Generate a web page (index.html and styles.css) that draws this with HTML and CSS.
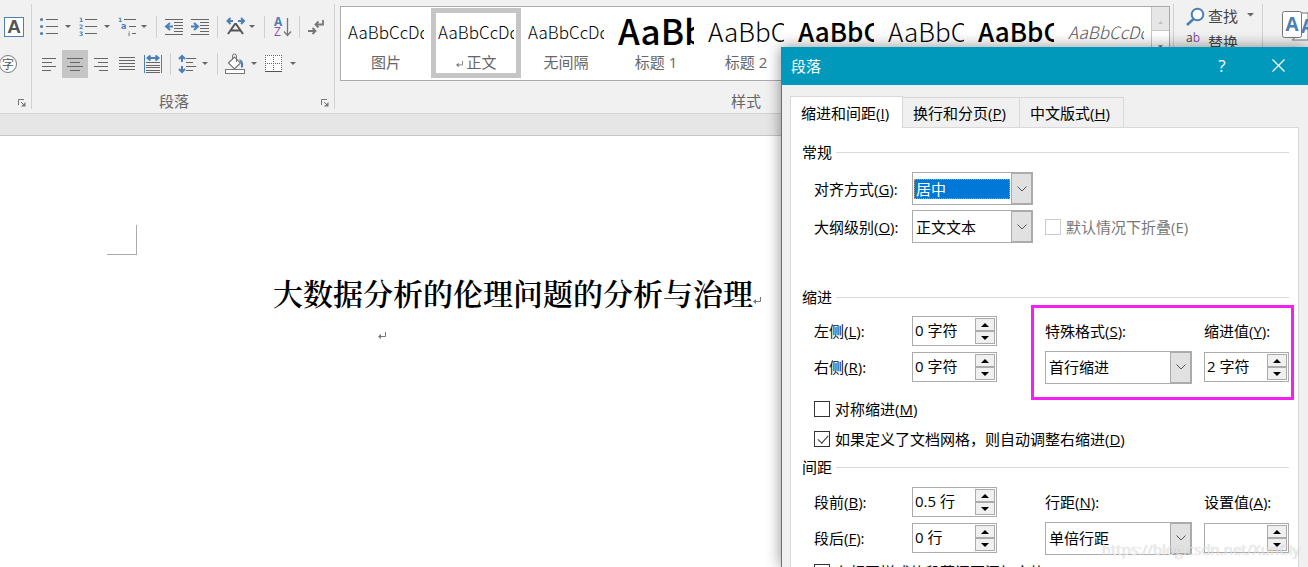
FILE: index.html
```html
<!DOCTYPE html>
<html lang="zh-CN">
<head>
<meta charset="utf-8">
<title>段落</title>
<link rel="stylesheet" href="styles.css">
</head>
<body>
<svg width="0" height="0" class="defs" aria-hidden="true">
  <symbol id="chev" viewBox="0 0 10 6"><path d="M.5.500l4.500 4.500 4.500-4.500" fill="none" stroke="#555"/></symbol>
  <symbol id="up" viewBox="0 0 8 4"><path d="M0 4l4-4 4 4z" fill="#000"/></symbol>
  <symbol id="down" viewBox="0 0 8 4"><path d="M0 0h8l-4 4z" fill="#000"/></symbol>
  <symbol id="ret" viewBox="0 0 8 8"><path d="M7.500 0v4.500H2" fill="none" stroke="#777"/><path d="M0 4.500L3 2v5z" fill="#777"/></symbol>
  <symbol id="launch" viewBox="0 0 8 8"><path d="M.5 6V.5H6M3 3l3 3" fill="none" stroke="#777"/><path d="M7.500 3v4.500H3z" fill="#777"/></symbol>
</svg>
<div class="app">
  <header class="ribbon">
    <section class="group font-group">
      <div class="tools">
        <div class="row"><button class="tool" aria-label="字符边框"><svg width="31" height="28" viewBox="0 13 31 28"><rect x="4.500" y="17.500" width="19" height="19" fill="#fff" stroke="#4a80b5"/><text x="14" y="33" class="ic-a" text-anchor="middle">A</text></svg></button></div>
        <div class="row"><button class="tool" aria-label="带圈字符"><svg width="31" height="28" viewBox="0 50 31 28"><circle cx="8" cy="64" r="8.500" fill="#fff" stroke="#777"/><text x="8" y="69" class="ic-zi" text-anchor="middle">字</text></svg></button></div>
      </div>
      <footer class="caption"><span></span><button class="tool launcher" aria-label="字体设置"><svg width="8" height="8"><use href="#launch"/></svg></button></footer>
    </section>
    <section class="group para-group">
      <div class="tools">
        <div class="row">
          <button class="tool" aria-label="项目符号"><svg width="41" height="28" viewBox="34 13 41 28"><path d="M46 19.500h12M46 26.500h12M46 33.500h12" class="ln"/><g fill="#4a80b5"><circle cx="41.500" cy="19.500" r="1.600"/><circle cx="41.500" cy="26.500" r="1.600"/><circle cx="41.500" cy="33.500" r="1.600"/></g><path d="M65 25h6l-3 3z" class="dn"/></svg></button>
          <button class="tool" aria-label="编号"><svg width="39" height="28" viewBox="75 13 39 28"><path d="M85 19.500h12M85 26.500h12M85 33.500h12" class="ln"/><text x="79" y="22" class="num">1</text><text x="79" y="29" class="num">2</text><text x="79" y="36" class="num">3</text><path d="M104 25h6l-3 3z" class="dn"/></svg></button>
          <button class="tool" aria-label="多级列表"><svg width="39" height="28" viewBox="114 13 39 28"><path d="M124 19.500h12M129 26.500h7M132 33.500h4" class="ln"/><text x="118" y="22" class="num">1</text><text x="121" y="29" class="num big">a</text><text x="128" y="36" class="num">i</text><path d="M141 25h6l-3 3z" class="dn"/></svg></button>
          <i class="bar"></i>
          <button class="tool" aria-label="减少缩进量"><svg width="31" height="28" viewBox="157 13 31 28"><path d="M165 19.500h18M174 22.500h9M174 25.500h9M174 28.500h9M174 31.500h9M165 34.500h18" class="ln"/><path d="M173 26.500h-6M170 23l-4 3.500 4 3.500" class="bl"/></svg></button>
          <button class="tool" aria-label="增加缩进量"><svg width="29" height="28" viewBox="188 13 29 28"><path d="M191 19.500h18M200 22.500h9M200 25.500h9M200 28.500h9M200 31.500h9M191 34.500h18" class="ln"/><path d="M191 26.500h6M194 23l4 3.500-4 3.500" class="bl"/></svg></button>
          <i class="bar"></i>
          <button class="tool" aria-label="中文版式"><svg width="46" height="28" viewBox="218 13 46 28"><path d="M233 21h-5M230.500 18l-3 3 3 3M238 21h5M241 18l3 3-3 3" class="bl"/><path d="M228 34l7-10h1l7 10M231 30.500h9" fill="none" stroke="#555" stroke-width="2"/><path d="M249 25h6l-3 3z" class="dn"/></svg></button>
          <i class="bar"></i>
          <button class="tool" aria-label="排序"><svg width="34" height="28" viewBox="265 13 34 28"><text x="274" y="26" class="az">A</text><text x="274" y="36" class="az z">Z</text><path d="M287.500 18v17M284 31.500l3.500 4 3.500-4" fill="none" stroke="#777" stroke-width="1.300"/></svg></button>
          <i class="bar"></i>
          <button class="tool" aria-label="显示编辑标记"><svg width="30" height="28" viewBox="300 13 30 28"><path d="M323 20v4.500h-7M318.500 21.500l-3 3 3 3M308 31h7M312.500 28l3 3-3 3" fill="none" stroke="#777" stroke-width="1.800"/></svg></button>
        </div>
        <div class="row">
          <button class="tool" aria-label="左对齐"><svg width="28" height="28" viewBox="34 50 28 28"><path d="M42 58.500h14M42 62.500h10M42 66.500h14M42 70.500h9" class="ln"/></svg></button>
          <button class="tool on" aria-label="居中"><svg width="26" height="28" viewBox="62 50 26 28"><path d="M67 58.500h16M70 62.500h10M67 66.500h16M70 70.500h10" class="ln"/></svg></button>
          <button class="tool" aria-label="右对齐"><svg width="26" height="28" viewBox="88 50 26 28"><path d="M94 58.500h14M98 62.500h10M94 66.500h14M99 70.500h9" class="ln"/></svg></button>
          <button class="tool" aria-label="两端对齐"><svg width="26" height="28" viewBox="114 50 26 28"><path d="M119 57.500h16M119 60.500h16M119 63.500h16M119 66.500h16M119 69.500h16" class="ln"/></svg></button>
          <button class="tool" aria-label="分散对齐"><svg width="30" height="28" viewBox="140 50 30 28"><path d="M144.500 55v18M161.500 55v18" stroke="#4a80b5"/><path d="M147 58h12M150.500 55.500l-3 2.500 3 2.500M155.500 55.500l3 2.500-3 2.500" class="bl"/><path d="M146 62.500h14M146 65.500h14M146 67.500h14M146 70.500h14M146 72.500h14" class="ln"/></svg></button>
          <i class="bar"></i>
          <button class="tool" aria-label="行距"><svg width="46" height="28" viewBox="171 50 46 28"><path d="M182 57v5M182 66v5M179 59l3-3 3 3M179 69l3 3 3-3" class="bl"/><path d="M186 58.500h10M186 62.500h7M186 66.500h10M186 70.500h7" class="ln"/><path d="M202 62h6l-3 3z" class="dn"/></svg></button>
          <i class="bar"></i>
          <button class="tool" aria-label="底纹"><svg width="43" height="28" viewBox="218 50 43 28"><path d="M228.500 63l6-6 6 6-6 6z" fill="#fff" stroke="#777" stroke-width="1.200"/><path d="M232.500 59v-3q0-2 2-2t2 2v6" fill="none" stroke="#777"/><path d="M239 59q5 1 4 8l-2 1 0-5z" fill="#4a80b5"/><rect x="225.500" y="69.500" width="19" height="4" fill="#fff" stroke="#777"/><path d="M251 62h6l-3 3z" class="dn"/></svg></button>
          <button class="tool" aria-label="边框"><svg width="40" height="28" viewBox="261 50 40 28"><rect x="265" y="55" width="17" height="16" fill="#fff"/><path d="M265 55.500h17M265 63.500h17M265.500 55v16M273.500 55v16M281.500 55v16" stroke="#666" stroke-dasharray="1 1"/><path d="M265 71.500h17" stroke="#555"/><path d="M290 62h6l-3 3z" class="dn"/></svg></button>
        </div>
      </div>
      <footer class="caption"><span>段落</span><button class="tool launcher" aria-label="段落设置"><svg width="8" height="8"><use href="#launch"/></svg></button></footer>
    </section>
    <section class="group style-group">
      <div class="gallery">
        <button class="style"><span class="sample">AaBbCcDd</span><span class="name">图片</span></button>
        <button class="style chosen"><span class="sample">AaBbCcDd</span><span class="name"><svg width="7" height="7"><use href="#ret"/></svg> 正文</span></button>
        <button class="style"><span class="sample">AaBbCcDd</span><span class="name">无间隔</span></button>
        <button class="style"><span class="sample huge">AaBb</span><span class="name">标题 1</span></button>
        <button class="style"><span class="sample large">AaBbC</span><span class="name">标题 2</span></button>
        <button class="style"><span class="sample large bold">AaBbC</span><span class="name">标题</span></button>
        <button class="style"><span class="sample large">AaBbC</span><span class="name">副标题</span></button>
        <button class="style"><span class="sample large bold">AaBbC</span><span class="name">强调</span></button>
        <button class="style"><span class="sample slant">AaBbCcDd</span><span class="name">不明显强调</span></button>
        <div class="scroller">
          <button class="off" aria-label="上一行"><svg width="5" height="3" viewBox="0 0 8 4"><path d="M0 4l4-4 4 4z" fill="#bbb"/></svg></button>
          <button aria-label="下一行"><svg width="5" height="3" viewBox="0 0 8 4"><path d="M0 0h8l-4 4z" fill="#666"/></svg></button>
          <button aria-label="其他"></button>
        </div>
      </div>
      <footer class="caption"><span>样式</span><span class="launcher"></span></footer>
    </section>
    <section class="group edit-group">
      <button class="tool edit"><svg width="19" height="20" viewBox="0 0 19 20"><circle cx="11.500" cy="7.500" r="5.800" fill="#fff" stroke="#4a80b5" stroke-width="2"/><path d="M7.500 12L1 18" stroke="#4a80b5" stroke-width="2.600"/></svg><span>查找</span><svg width="8" height="4" viewBox="0 0 8 4"><path d="M0 0h7L3.500 3.500z" class="dn"/></svg></button>
      <button class="tool edit"><svg width="19" height="28" viewBox="0 0 19 28"><text x="0" y="13" class="ab">a<tspan fill="#8a4fb5">b</tspan></text><text x="0" y="26" class="ab blue">ac</text></svg><span>替换</span></button>
    </section>
    <section class="group select-group">
      <button class="tool" aria-label="选择"><svg width="45" height="50" viewBox="1263 0 45 50"><path d="M1292 40l4-3v-20l4-4h8v27z" fill="#fff" stroke="#777"/><text x="1301" y="33" class="ic-sel">A</text><rect x="1282.500" y="11.500" width="19" height="26" rx="2" fill="#fff" stroke="#777"/><text x="1292" y="31" class="ic-sel" text-anchor="middle">A</text></svg></button>
    </section>
  </header>
  <div class="strip"></div>
  <main class="page">
    <div class="corner"></div>
    <h1>大数据分析的伦理问题的分析与治理<svg width="8" height="8"><use href="#ret"/></svg></h1>
    <p><svg width="8" height="8"><use href="#ret"/></svg></p>
  </main>

  <div class="dialog" role="dialog" aria-labelledby="dlg-title">
    <header class="titlebar">
      <h2 id="dlg-title">段落</h2>
      <button aria-label="帮助">?</button>
      <button aria-label="关闭"><svg width="13" height="13" viewBox="0 0 13 13"><path d="M.5.5l12 12M12.500.5l-12 12" stroke="#fff" stroke-width="1.200"/></svg></button>
    </header>
    <div class="tabs" role="tablist">
      <button class="tab active" role="tab" aria-selected="true">缩进和间距(<u>I</u>)</button>
      <button class="tab" role="tab">换行和分页(<u>P</u>)</button>
      <button class="tab" role="tab">中文版式(<u>H</u>)</button>
    </div>
    <div class="panel" role="tabpanel">
      <h3>常规</h3>
      <div class="fields general">
        <label for="align">对齐方式(<u>G</u>):</label>
        <div class="combo focus"><select id="align"><option>居中</option></select><span class="drop"><svg width="10" height="6"><use href="#chev"/></svg></span></div>
        <label for="level">大纲级别(<u>O</u>):</label>
        <div class="combo"><select id="level"><option>正文文本</option></select><span class="drop"><svg width="10" height="6"><use href="#chev"/></svg></span></div>
        <label class="check disabled"><input type="checkbox" disabled>默认情况下折叠(E)</label>
      </div>
      <h3>缩进</h3>
      <div class="fields measures">
        <label for="left">左侧(<u>L</u>):</label>
        <div class="spin"><input id="left" type="text" value="0 字符"><button aria-label="增加"><svg width="8" height="4"><use href="#up"/></svg></button><button aria-label="减少"><svg width="8" height="4"><use href="#down"/></svg></button></div>
        <label for="special">特殊格式(<u>S</u>):</label>
        <label for="by">缩进值(<u>Y</u>):</label>
        <label for="right">右侧(<u>R</u>):</label>
        <div class="spin"><input id="right" type="text" value="0 字符"><button aria-label="增加"><svg width="8" height="4"><use href="#up"/></svg></button><button aria-label="减少"><svg width="8" height="4"><use href="#down"/></svg></button></div>
        <div class="combo wide"><select id="special"><option>首行缩进</option></select><span class="drop"><svg width="10" height="6"><use href="#chev"/></svg></span></div>
        <div class="spin"><input id="by" type="text" value="2 字符"><button aria-label="增加"><svg width="8" height="4"><use href="#up"/></svg></button><button aria-label="减少"><svg width="8" height="4"><use href="#down"/></svg></button></div>
        <div class="marker"></div>
      </div>
      <div class="checks">
        <label class="check"><input type="checkbox"><span>对称缩进(<u>M</u>)</span></label>
        <label class="check"><input type="checkbox" checked><span>如果定义了文档网格，则自动调整右缩进(<u>D</u>)</span></label>
      </div>
      <h3>间距</h3>
      <div class="fields measures distance">
        <label for="before">段前(<u>B</u>):</label>
        <div class="spin"><input id="before" type="text" value="0.5 行"><button aria-label="增加"><svg width="8" height="4"><use href="#up"/></svg></button><button aria-label="减少"><svg width="8" height="4"><use href="#down"/></svg></button></div>
        <label for="spacing">行距(<u>N</u>):</label>
        <label for="at">设置值(<u>A</u>):</label>
        <label for="after">段后(<u>F</u>):</label>
        <div class="spin"><input id="after" type="text" value="0 行"><button aria-label="增加"><svg width="8" height="4"><use href="#up"/></svg></button><button aria-label="减少"><svg width="8" height="4"><use href="#down"/></svg></button></div>
        <div class="combo wide"><select id="spacing"><option>单倍行距</option></select><span class="drop"><svg width="10" height="6"><use href="#chev"/></svg></span></div>
        <div class="spin"><input id="at" type="text" value=""><button aria-label="增加"><svg width="8" height="4"><use href="#up"/></svg></button><button aria-label="减少"><svg width="8" height="4"><use href="#down"/></svg></button></div>
      </div>
      <div class="checks last">
        <label class="check"><input type="checkbox"><span>在相同样式的段落间不添加空格(<u>C</u>)</span></label>
      </div>
    </div>
  </div>
  <div class="watermark">https://blog.csdn.net/XunCiy</div>
</div>
</body>
</html>
```
FILE: styles.css
```css
* { box-sizing: border-box; }
body { margin: 0; font: 15px/20px "Open Sans", "Noto Sans CJK SC", sans-serif; color: #000; }
button, input, select { font: inherit; color: inherit; margin: 0; padding: 0; border: 0; background: none; border-radius: 0; }
.defs { position: absolute; }
.app { position: relative; height: 100vh; overflow: hidden; background: #fff; display: flex; flex-direction: column; }

/* Ribbon */
.ribbon { display: flex; flex: none; height: 114px; padding-top: 4px; background: #f1f1f1; border-bottom: 1px solid #d2d2d2; color: #444; }
.group { display: flex; flex-direction: column; height: 105px; border-right: 1px solid #d2d2d2; }
.font-group { width: 32px; }
.para-group { width: 303px; }
.para-group .row { padding-left: 2px; }
.tools { display: flex; flex-direction: column; gap: 9px; padding-top: 9px; }
.row { display: flex; align-items: center; }
.tool { display: block; flex: none; }
.tool svg { display: block; }
.tool.on { background: #c5c5c5; }
.bar { width: 1px; height: 22px; background: #d0d0d0; }
.row .bar:first-of-type { margin-left: 3px; }
.row:nth-child(2) .bar:first-of-type { margin-left: 0; }
.ln { stroke: #666; stroke-width: 1; fill: none; }
.bl { stroke: #4a80b5; stroke-width: 2; fill: none; }
.dn { fill: #666; }
.ic-a { font: bold 19px "Liberation Sans", sans-serif; fill: #555; }
.ic-zi { font: 12px "Noto Sans CJK SC", sans-serif; fill: #555; }
.ic-sel { font: bold 19px "Open Sans", sans-serif; fill: #4a80b5; }
.num { font: bold 6px "DejaVu Sans", sans-serif; fill: #4a80b5; }
.num.big { font-size: 8px; }
.az { font: bold 12px "Open Sans", sans-serif; fill: #4a80b5; }
.az.z { fill: #8a4fb5; font-weight: 400; }
.ab { font: 12px "Open Sans", sans-serif; fill: #444; }
.ab.blue { fill: #4a80b5; }
.caption { display: flex; align-items: center; margin-top: auto; height: 16px; color: #666; }
.caption > span:first-child { flex: 1; text-align: center; }
.launcher { width: 18px; padding: 4px 0 0 5px; }
.font-group .launcher { width: 14px; padding-left: 1px; }
.style-group { flex: 1; min-width: 0; padding: 2px 3px 0 5px; }
.gallery { display: flex; height: 75px; background: #fff; border: 1px solid #ababab; }
.style { display: flex; flex-direction: column; flex: none; width: 90px; height: 70px; margin-top: 1px; padding: 5px 7px; }
.style.chosen { padding: 0 2px; border: 5px solid #c5c5c5; }
.sample { display: block; height: 38px; width: 76px; overflow: hidden; white-space: nowrap; text-align: left; font: 300 17px/38px "Noto Sans CJK SC", sans-serif; color: #000; }
.huge { font-size: 35px; font-weight: 500; line-height: 34px; }
.large { font-size: 26px; line-height: 36px; }
.large.bold { font-weight: 500; }
.slant { font-style: italic; color: #555; }
.name { display: block; text-align: center; font-size: 15px; color: #666; height: 22px; line-height: 22px; white-space: nowrap; }
.scroller { flex: 1; display: flex; flex-direction: column; border-left: 1px solid #c6c6c6; }
.scroller button { flex: 1; border-bottom: 1px solid #c6c6c6; line-height: 8px; }
.scroller .off { background: #e6e6e6; }
.edit-group { width: 89px; padding-left: 12px; overflow: hidden; }
.edit { display: flex; align-items: center; gap: 3px; height: 26px; }
.edit span { margin-top: -2px; }
.edit svg:last-child:not(:first-child) { margin: -4px 0 0 6px; }
.select-group { width: 45px; border: 0; overflow: hidden; }
.select-group .tool { margin-top: -4px; }

/* Document */
.strip { flex: none; height: 22px; background: #e6e6e6; border-bottom: 1px solid #c6c6c6; }
.page { flex: 1; padding-top: 89px; }
.corner { width: 30px; height: 30px; margin-left: 107px; border: solid #aaa; border-width: 0 1px 1px 0; }
.page h1 { margin: 17px 0 0 273px; font: 600 30px/40px "Noto Serif CJK SC", "Noto Sans CJK SC", serif; white-space: nowrap; }
.page p { margin: 12px 0 0 378px; }

/* Dialog window */
.dialog { position: absolute; left: 781px; right: 0; top: 47px; bottom: 0; overflow: hidden; background: #f0f0f0; border-left: 1px solid #0099bc; box-shadow: 0 0 14px rgba(0, 0, 0, .45); }
.titlebar { display: flex; align-items: center; height: 38px; padding: 0 7px 0 9px; background: #0099bc; color: #fff; }
.titlebar h2 { flex: 1; margin: 0; font-size: 15px; font-weight: 400; }
.titlebar button { width: 44px; height: 38px; font-size: 17px; }
.titlebar button + button { width: 45px; margin-left: 12px; }
.tabs { display: flex; align-items: flex-end; padding: 11px 8px 0; }
.tab { height: 30px; padding: 0 13px 0 10px; border: 1px solid #d9d9d9; border-left-width: 0; white-space: nowrap; }
.tab.active { position: relative; height: 32px; margin-bottom: -1px; border-left-width: 1px; border-bottom: 0; background: #fff; }
.tab:not(.active) { border-bottom: 0; }
.panel { margin: 0 9px 0 8px; height: 500px; padding: 12px 9px 0 11px; background: #fff; border: 1px solid #d9d9d9; }
h3 { display: flex; align-items: center; gap: 4px; height: 24px; margin: 0; font-size: 15px; font-weight: 400; }
h3::after { content: ""; flex: 1; height: 1px; background: #d9d9d9; }
.fields { position: relative; display: grid; align-items: center; margin-left: 12px; white-space: nowrap; }
.general { grid-template-columns: 98px 121px 1fr; row-gap: 5px; margin-top: 8px; margin-bottom: 42px; }
.general label[for] { grid-column: 1; }
.measures { grid-template-columns: 98px 133px 1fr 85px; grid-auto-rows: 30px; row-gap: 6px; margin-top: 7px; }
.distance { margin-top: 8px; }
.combo { display: flex; align-items: center; height: 33px; border: 1px solid #ababab; background: #fff; }
.combo.wide { width: 147px; }
.combo select { appearance: none; flex: 1; min-width: 0; height: 20px; margin-left: 1px; padding-left: 2px; outline: 0; line-height: 18px; }
.combo.focus select { background: #0078d7; color: #fff; border: 1px dotted #ff8728; padding-left: 1px; }
.drop { display: flex; align-items: center; justify-content: center; width: 21px; height: 31px; margin-left: 1px; border: 1px solid #ababab; background: #e1e1e1; }
.spin { display: grid; grid-template-columns: 1fr 20px; grid-template-rows: 1fr 1fr; width: 85px; height: 30px; padding: 1px; border: 1px solid #ababab; background: #fff; }
.spin input { grid-row: 1 / 3; min-width: 0; width: 100%; height: 22px; padding-left: 1px; outline: 0; }
.spin button { display: flex; align-items: center; justify-content: center; border: 1px solid #ababab; background: #f0f0f0; }
.marker { position: absolute; left: 217px; right: -5px; top: -11px; height: 95px; border: 3px solid #f31ff3; pointer-events: none; }
.checks { margin: 12px 0 1px 12px; }
.checks.last { margin-top: 4px; }
.check { display: flex; align-items: center; gap: 5px; height: 30px; }
.general .check { height: 33px; margin-left: 12px; }
.check input { appearance: none; flex: none; position: relative; width: 16px; height: 16px; border: 1px solid #333; background: #fff; }
.check input:checked::after { content: ""; position: absolute; left: 5px; top: 1px; width: 5px; height: 9px; border: solid #333; border-width: 0 1px 1px 0; transform: rotate(42deg); }
.check.disabled { color: #777; }
.check.disabled input { border-color: #ccc; }
.watermark { position: absolute; right: 8px; bottom: 7px; font: 15px/22px "Open Sans", sans-serif; color: rgba(255, 255, 255, .75); text-shadow: 0 0 1px rgba(0, 0, 0, .3); }
```
